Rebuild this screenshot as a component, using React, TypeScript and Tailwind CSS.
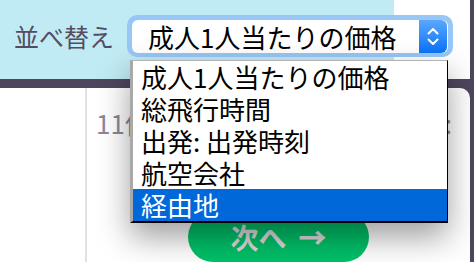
const options = ["成人1人当たりの価格", "総飛行時間", "出発: 出発時刻", "航空会社", "経由地"]

const jp = "font-['Hiragino_Sans','Noto_Sans_CJK_JP',sans-serif]"

function Stepper() {
  return (
    <div className="flex h-full w-[28px] flex-col items-center justify-center gap-[3px] rounded-r-[6px] bg-[linear-gradient(#5aa6ff,#0a74f6)]">
      <svg width="12" height="8" viewBox="0 0 12 8" fill="none">
        <path d="M1.5 6.5 6 2l4.5 4.5" stroke="white" strokeWidth="2" strokeLinecap="round" strokeLinejoin="round" />
      </svg>
      <svg width="12" height="8" viewBox="0 0 12 8" fill="none">
        <path d="M1.5 1.5 6 6l4.5-4.5" stroke="white" strokeWidth="2" strokeLinecap="round" strokeLinejoin="round" />
      </svg>
    </div>
  )
}

function SortSelect() {
  return (
    <div className="h-[42px] w-[326px] flex-none rounded-[10px] bg-[#98c7f7] p-[5px]">
      <div className="flex h-[33px] items-center rounded-[6px] bg-white pl-[16px] pr-[1px]">
        <span className={`flex-1 text-[26px] leading-none text-black ${jp}`}>成人1人当たりの価格</span>
        <Stepper />
      </div>
    </div>
  )
}

function OptionList() {
  return (
    <div className="absolute left-[130px] top-[60px] w-[318px] border-b-2 border-l-[3px] border-r border-t border-b-black border-l-[#a9a9a9] border-r-black border-t-[#b3b3b3] bg-white shadow-[0_14px_30px_rgba(0,0,0,0.38)]">
      {options.map((o, i) => (
        <div
          key={o}
          className={`h-[32px] pl-[8px] text-[26px] leading-[32px] ${jp} ${
            i === options.length - 1 ? "bg-[#0068d9] text-white" : "text-black"
          }`}
        >
          {o}
        </div>
      ))}
    </div>
  )
}

export default function App() {
  return (
    <div className="relative flex h-[262px] w-[474px] overflow-hidden bg-[#4e465d]">
      <div className="flex w-[470px] flex-col">
        <div className="flex h-[82px] items-start bg-[linear-gradient(to_right,#c1ebf4_394px,#ffffff_394px)] pl-[14px] pt-[15px]">
          <span className={`mt-[9px] w-[113px] flex-none text-[25px] leading-none text-[#554b62] ${jp}`}>並べ替え</span>
          <SortSelect />
        </div>
        <div className="h-[10px] bg-[#4e465d]" />
        <div className="flex flex-1">
          <div className="w-[87px] border-r-2 border-[#e2dfe9] bg-white" />
          <div className="flex flex-1 flex-col rounded-tr-[10px] bg-white">
            <div className={`flex justify-between pl-[9px] pr-[18px] pt-[22px] text-[26px] leading-none text-[#8d8796] ${jp}`}>
              <span>11件</span>
              <span>:</span>
            </div>
            <div className="mt-[76px] flex justify-center">
              <div className={`flex h-[50px] w-[181px] items-center justify-center gap-[12px] rounded-full bg-[#00c068] text-[28px] font-bold leading-none text-[#dcdcdc] ${jp}`}>
                <span>次へ</span>
                <span className="font-black">→</span>
              </div>
            </div>
          </div>
        </div>
      </div>
      <div className="w-[4px] bg-[#4e465d]" />
      <OptionList />
    </div>
  )
}
